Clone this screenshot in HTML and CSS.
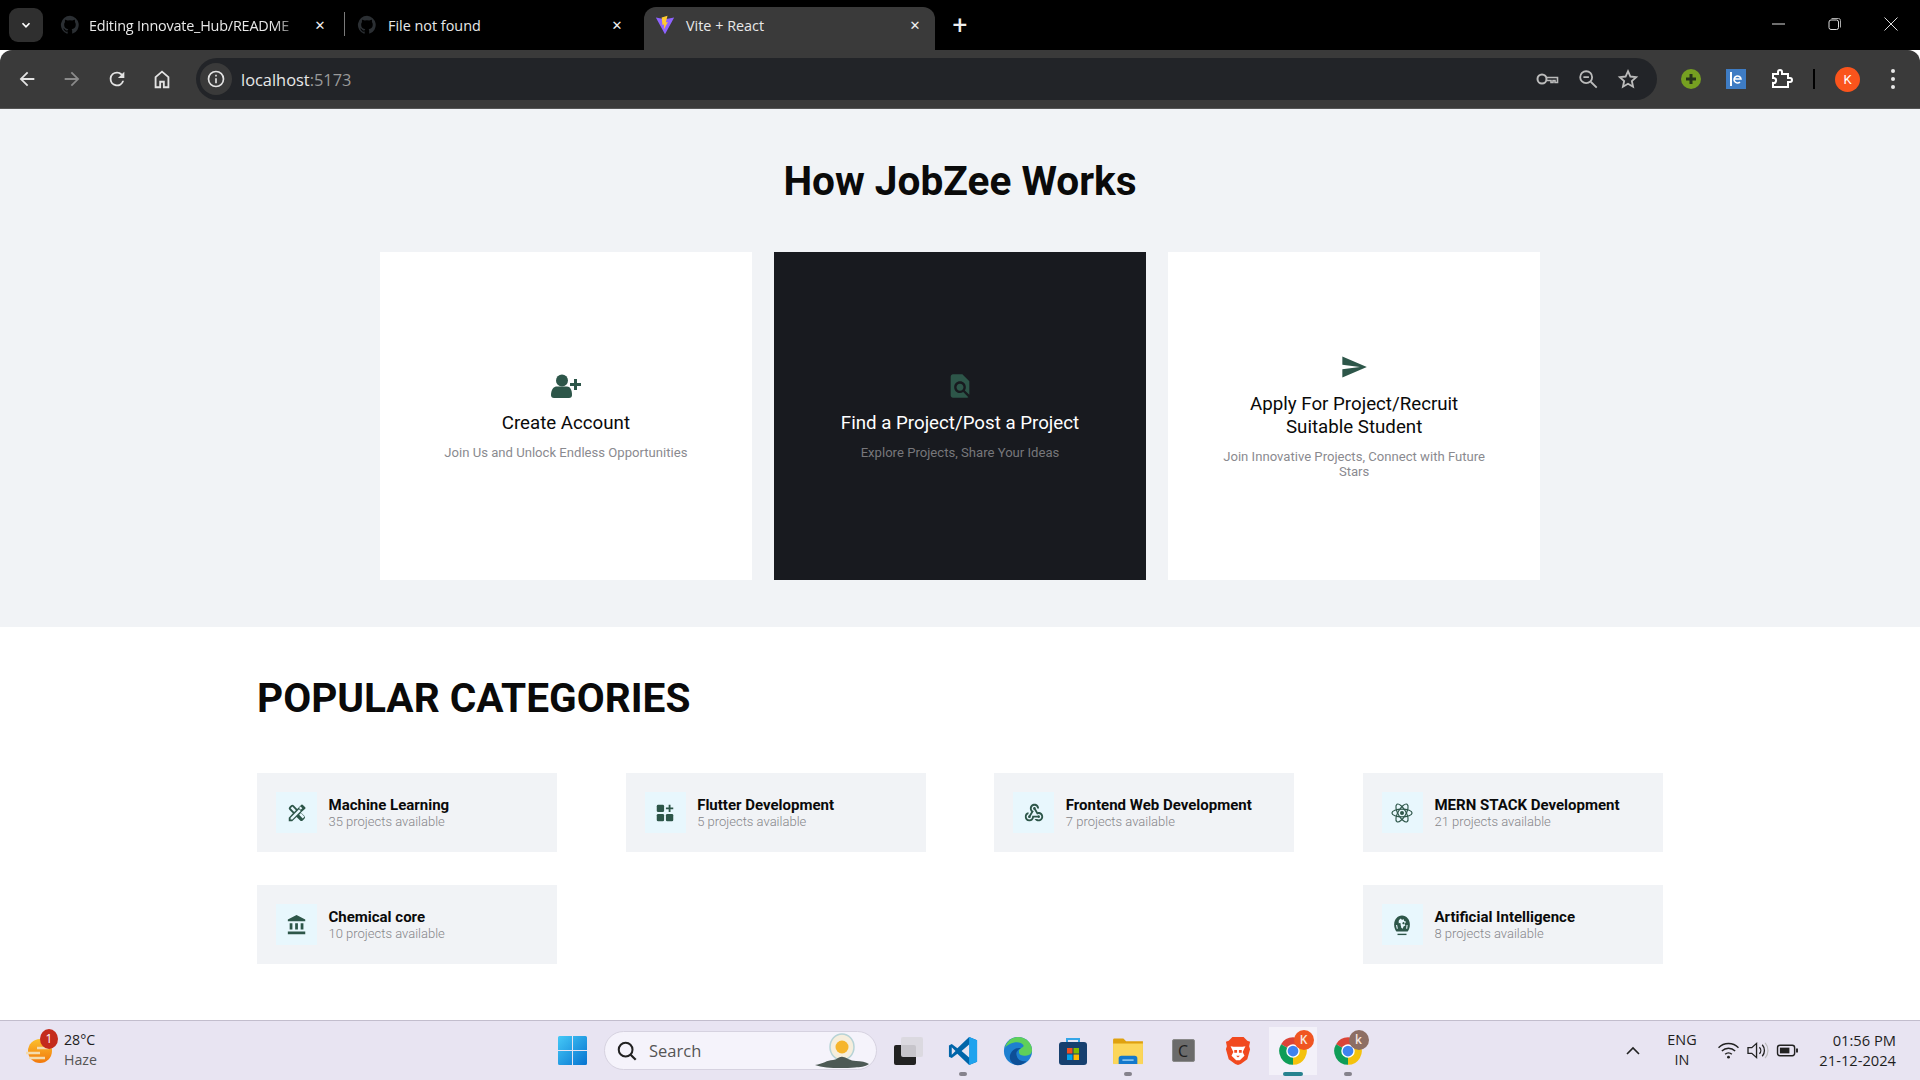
FILE: index.html
```html
<!DOCTYPE html>
<html lang="en">
<head>
<meta charset="utf-8">
<title>Vite + React</title>
<link rel="stylesheet" href="styles.css">
</head>
<body>
<svg class="defs" width="0" height="0" aria-hidden="true">
  <symbol id="gh" viewBox="0 0 24 24"><path d="M12 1a11 11 0 0 0-3.500 21.400c.500.100.700-.200.700-.500v-2c-3 .700-3.700-1.300-3.700-1.300-.500-1.200-1.200-1.600-1.200-1.600-1-.700.100-.700.100-.700 1.100.100 1.700 1.100 1.700 1.100 1 1.700 2.600 1.200 3.200.900.100-.700.400-1.200.700-1.500-2.400-.300-5-1.200-5-5.400 0-1.200.400-2.200 1.100-2.900-.100-.300-.500-1.400.100-2.900 0 0 .900-.300 3 1.100a10 10 0 0 1 5.500 0c2.100-1.400 3-1.100 3-1.100.600 1.500.200 2.600.100 2.900.700.700 1.100 1.700 1.100 2.900 0 4.200-2.600 5.100-5 5.400.400.300.700 1 .700 2v3c0 .300.200.600.700.500A11 11 0 0 0 12 1z"/></symbol>
  <symbol id="chrome" viewBox="0 0 24 24"><path fill="#db4437" d="M2.470 6.500A11 11 0 0 1 21.530 6.500L12 12z"/><path fill="#f4c20d" d="M21.530 6.500A11 11 0 0 1 12 23L12 12z"/><path fill="#0f9d58" d="M12 23A11 11 0 0 1 2.470 6.500L12 12z"/><circle cx="12" cy="12" r="5.400" fill="#fff"/><circle cx="12" cy="12" r="4.300" fill="#3f83f0"/></symbol>
</svg>

<header class="tabstrip">
  <button class="tab-menu"><svg viewBox="0 0 24 24" class="i14"><path d="M6 9l6 6 6-6" fill="none" stroke="#fff" stroke-width="3"/></svg></button>
  <div class="tab tab-first">
    <svg class="favicon dim"><use href="#gh"/></svg>
    <span class="tab-title fade">Editing Innovate_Hub/README</span>
    <span class="tab-x">✕</span>
  </div>
  <span class="tab-sep"></span>
  <div class="tab tab-second">
    <svg class="favicon dim"><use href="#gh"/></svg>
    <span class="tab-title">File not found</span>
    <span class="tab-x">✕</span>
  </div>
  <div class="tab tab-active">
    <svg class="favicon" viewBox="0 0 24 24"><path fill="#8e63ff" d="M1 3l11 2 11-2-11 20z"/><path fill="#ffcb2e" d="M15 1L8 3l1 9 2-.5-.5 6 5-9-2.500.5z"/></svg>
    <span class="tab-title">Vite + React</span>
    <span class="tab-x">✕</span>
  </div>
  <span class="tab-new">+</span>
  <div class="win-ctrls">
    <svg viewBox="0 0 14 14" class="win"><path d="M0 7h13" stroke="#ddd" fill="none"/></svg>
    <svg viewBox="0 0 14 14" class="win"><rect x="1" y="3" width="9.500" height="9.500" rx="2" stroke="#ddd" fill="none"/><path d="M3.500 1.500h7a2 2 0 0 1 2 2v7" stroke="#aaa" fill="none"/></svg>
    <svg viewBox="0 0 14 14" class="win"><path d="M.5.500l13 13M13.500.500l-13 13" stroke="#ddd" fill="none"/></svg>
  </div>
</header>

<nav class="toolbar">
  <span class="tool"><svg viewBox="0 0 24 24" class="i22"><path fill="#e3e3e3" d="M20 11H7.800l5.600-5.600L12 4l-8 8 8 8 1.400-1.400L7.800 13H20z"/></svg></span>
  <span class="tool"><svg viewBox="0 0 24 24" class="i22"><path fill="#8a8a8a" d="M4 11h12.200l-5.600-5.600L12 4l8 8-8 8-1.400-1.400 5.600-5.600H4z"/></svg></span>
  <span class="tool"><svg viewBox="0 0 24 24" class="i22"><path fill="#e3e3e3" d="M17.650 6.350A7.950 7.950 0 0 0 12 4a8 8 0 1 0 7.730 10h-2.080A6 6 0 1 1 12 6c1.660 0 3.140.690 4.220 1.780L13 11h7V4z"/></svg></span>
  <span class="tool"><svg viewBox="0 0 24 24" class="i22"><path fill="none" stroke="#e3e3e3" stroke-width="2" d="M5 21V10l7-6 7 6v11h-5v-6h-4v6z"/></svg></span>
  <div class="omnibox">
    <span class="info"><svg viewBox="0 0 24 24" class="i20"><circle cx="12" cy="12" r="9" fill="none" stroke="#e3e3e3" stroke-width="2"/><path d="M12 11v6M12 7v2" stroke="#e3e3e3" stroke-width="2"/></svg></span>
    <span class="url">localhost<span class="url-dim">:5173</span></span>
    <span class="omni-icons">
      <svg viewBox="0 0 24 24" class="i24"><circle cx="7" cy="12" r="4.500" fill="none" stroke="#bbb" stroke-width="2"/><path d="M11.500 10.500h11v5h-2.500v-2h-2v2h-2v-2h-4.500" fill="none" stroke="#bbb" stroke-width="1.600"/></svg>
      <svg viewBox="0 0 24 24" class="i22"><circle cx="10" cy="10" r="6.500" fill="none" stroke="#bbb" stroke-width="2"/><path d="M15 15l6.500 6.500M7 10h6" stroke="#bbb" stroke-width="2"/></svg>
      <svg viewBox="0 0 24 24" class="i22"><path fill="none" stroke="#bbb" stroke-width="2" d="M12 3.500l2.600 5.800 6.300.700-4.700 4.200 1.300 6.200L12 17.200l-5.500 3.200 1.300-6.200L3.100 10l6.300-.700z"/></svg>
    </span>
  </div>
  <div class="ext-row">
    <span class="ext"><svg viewBox="0 0 22 22" class="i22"><circle cx="11" cy="11" r="10" fill="#76a021"/><path d="M11 6v10M6 11h10" stroke="#26331b" stroke-width="3"/></svg></span>
    <span class="ext"><svg viewBox="0 0 20 20" class="i20"><rect width="20" height="20" fill="#3e7cc4"/><path d="M5 3v14" stroke="#fff" stroke-width="2"/><path d="M8 10h7a3.500 3.500 0 1 0-1 3" fill="none" stroke="#fff" stroke-width="1.600"/></svg></span>
    <span class="ext"><svg viewBox="0 0 24 24" class="i24"><path fill="none" stroke="#fff" stroke-width="2" d="M4 7h5V5a2 2 0 0 1 4 0v2h6v4h2a2 2 0 0 1 0 4h-2v5H4v-4a2.500 2.500 0 0 0 1-5L4 11z"/></svg></span>
    <span class="ext-sep"></span>
    <span class="avatar">K</span>
    <span class="dots"><i></i><i></i><i></i></span>
  </div>
</nav>

<main class="page">
  <section class="how">
    <h1 class="how-title">How JobZee Works</h1>
    <div class="how-grid">
      <article class="how-card">
        <svg viewBox="0 0 30 24" class="how-icon icon-user"><circle cx="11" cy="6.500" r="6"/><path d="M0 21c0-6 3-8.500 6-8.500h10c3 0 5 3 5 8.500 0 2-1 3-3 3H3c-2 0-3-1-3-3z"/><path d="M24.500 5v11M19 10.500h11" stroke="#2d5649" stroke-width="3"/></svg>
        <h3 class="how-name">Create Account</h3>
        <p class="how-text">Join Us and Unlock Endless Opportunities</p>
      </article>
      <article class="how-card how-card-dark">
        <svg viewBox="0 0 24 24" class="how-icon"><path d="M20 19.590V8l-6-6H6c-1.100 0-1.990.900-1.990 2L4 20c0 1.100.890 2 1.990 2H18c.450 0 .850-.150 1.190-.400l-4.430-4.430c-.800.520-1.740.830-2.760.830-2.760 0-5-2.240-5-5s2.240-5 5-5 5 2.240 5 5c0 1.020-.310 1.960-.830 2.750L20 19.590zM9 13c0 1.660 1.340 3 3 3s3-1.340 3-3-1.340-3-3-3-3 1.340-3 3z"/></svg>
        <h3 class="how-name">Find a Project/Post a Project</h3>
        <p class="how-text">Explore Projects, Share Your Ideas</p>
      </article>
      <article class="how-card">
        <svg viewBox="0 0 24 24" class="how-icon"><path d="M2.010 21L23 12 2.010 3 2 10l15 2-15 2z"/></svg>
        <h3 class="how-name">Apply For Project/Recruit Suitable Student</h3>
        <p class="how-text">Join Innovative Projects, Connect with Future Stars</p>
      </article>
    </div>
  </section>

  <section class="cats">
    <h2 class="cats-title">POPULAR CATEGORIES</h2>
    <div class="cats-grid">
      <div class="cat">
        <span class="cat-icon"><svg viewBox="0 0 24 24"><path fill-rule="evenodd" d="M20.970 7.270a1 1 0 0 0 0-1.410l-2.830-2.830a1 1 0 0 0-1.410 0l-4.490 4.490-3.890-3.890a2 2 0 0 0-2.830 0l-1.900 1.900a2 2 0 0 0 0 2.830l3.890 3.890L3 17.250V21h3.750l4.760-4.760 3.890 3.890a2 2 0 0 0 2.830 0l1.900-1.900a2 2 0 0 0 0-2.830l-3.890-3.890zM5.040 6.940l1.890-1.900 3.890 3.890-1.900 1.900zm9.300 7.080l1.900-1.900 3.890 3.890-1.900 1.900zM6.920 19H5v-1.920l9.200-9.200 1.920 1.920zm9.200-10.610l-1.920-1.920 1.670-1.670 1.920 1.920z"/></svg></span>
        <span class="cat-body"><b class="cat-name">Machine Learning</b><small class="cat-sub">35 projects available</small></span>
      </div>
      <div class="cat">
        <span class="cat-icon"><svg viewBox="0 0 24 24"><rect x="3" y="3" width="8" height="8" rx="1.500"/><rect x="3" y="13" width="8" height="8" rx="1.500"/><rect x="13" y="13" width="8" height="8" rx="1.500"/><path d="M17 3v8M13 7h8" stroke="#2d5649" stroke-width="2"/></svg></span>
        <span class="cat-body"><b class="cat-name">Flutter Development</b><small class="cat-sub">5 projects available</small></span>
      </div>
      <div class="cat">
        <span class="cat-icon"><svg viewBox="0 0 24 24"><path d="M10 15h5.880c.270-.310.670-.500 1.120-.500.830 0 1.500.670 1.500 1.500s-.670 1.500-1.500 1.500c-.440 0-.840-.190-1.120-.500H11.900A5 5 0 1 1 6 11.100v2.070c-1.160.410-2 1.530-2 2.830 0 1.650 1.350 3 3 3s3-1.350 3-3v-1zm2.500-11c1.650 0 3 1.350 3 3h2c0-2.760-2.240-5-5-5s-5 2.240-5 5c0 1.430.600 2.710 1.550 3.620l-2.350 3.900c-.680.140-1.200.750-1.200 1.480 0 .830.670 1.500 1.500 1.500s1.500-.670 1.500-1.500c0-.160-.020-.310-.070-.450l3.380-5.630C10.490 9.610 9.500 8.420 9.500 7c0-1.650 1.350-3 3-3zm4.500 9c-.640 0-1.230.200-1.720.540l-3.050-5.070C11.530 8.350 11 7.740 11 7c0-.830.670-1.500 1.500-1.500S14 6.170 14 7c0 .150-.020.290-.060.430l2.190 3.650c.280-.050.570-.080.870-.080 2.760 0 5 2.240 5 5s-2.240 5-5 5c-1.850 0-3.470-1.010-4.330-2.500h2.670c.480.320 1.050.500 1.660.500 1.650 0 3-1.350 3-3s-1.350-3-3-3z"/></svg></span>
        <span class="cat-body"><b class="cat-name">Frontend Web Development</b><small class="cat-sub">7 projects available</small></span>
      </div>
      <div class="cat">
        <span class="cat-icon"><svg viewBox="0 0 24 24"><g fill="none" stroke="#2d5649" stroke-width="1.300"><ellipse cx="12" cy="12" rx="11" ry="4.300"/><ellipse cx="12" cy="12" rx="11" ry="4.300" transform="rotate(60 12 12)"/><ellipse cx="12" cy="12" rx="11" ry="4.300" transform="rotate(120 12 12)"/></g><circle cx="12" cy="12" r="2.200"/></svg></span>
        <span class="cat-body"><b class="cat-name">MERN STACK Development</b><small class="cat-sub">21 projects available</small></span>
      </div>
      <div class="cat">
        <span class="cat-icon"><svg viewBox="0 0 24 24"><path d="M4 10v7h3v-7H4zm6 0v7h3v-7h-3zM2 22h19v-3H2v3zm14-12v7h3v-7h-3zm-4.500-9L2 6v2h19V6l-9.500-5z"/></svg></span>
        <span class="cat-body"><b class="cat-name">Chemical core</b><small class="cat-sub">10 projects available</small></span>
      </div>
      <div class="cat cat-last">
        <span class="cat-icon"><svg viewBox="0 0 24 24" preserveAspectRatio="none" class="icon-ai"><path d="M4.500 19C2.500 17 1.500 14.500 1.500 11.500 1.500 6 6 1.500 12 1.500S22.500 6 22.500 11.500c0 3-1 5.500-3 7.500z"/><path d="M6 21.500h12v1.500H6z"/><path fill="#e8f7fd" d="M8 6.500l2.500-1.500 1.500 1.500 2-1 1 2 2.500 1-2 2.500 1 1.500-2.500 1-1 2.500-2-1-.5-2.500-2.500-1.500-.5-2.500z"/><circle cx="9" cy="11" r="1.300"/><circle cx="14" cy="10" r="1.300"/><path fill="#e8f7fd" d="M4 12h1.500l1 4H5zM19.500 12H18l-.500 4H19z"/></svg></span>
        <span class="cat-body"><b class="cat-name">Artificial Intelligence</b><small class="cat-sub">8 projects available</small></span>
      </div>
    </div>
  </section>
</main>

<footer class="taskbar">
  <div class="weather">
    <span class="weather-icon">
      <svg viewBox="0 0 28 26" class="i-weather"><defs><linearGradient id="sun" x1="0" y1="0" x2="0" y2="1"><stop offset="0" stop-color="#fbc02d"/><stop offset="1" stop-color="#f2780c"/></linearGradient></defs><circle cx="15" cy="13" r="12" fill="url(#sun)"/><path d="M1 15h14M4 20h16M12 10h12" stroke="#f3dcae" stroke-width="2.400"/></svg>
      <span class="weather-badge">1</span>
    </span>
    <span class="weather-text"><span class="w-temp">28°C</span><span class="w-cond">Haze</span></span>
  </div>
  <svg viewBox="0 0 29 29" class="win-logo"><defs><linearGradient id="wl" x1="0" y1="0" x2="1" y2="1"><stop offset="0" stop-color="#45c9f7"/><stop offset="1" stop-color="#0673d0"/></linearGradient></defs><path fill="url(#wl)" d="M0 1.500A1.500 1.500 0 0 1 1.500 0H14v14H0zM15 0h12.500A1.500 1.500 0 0 1 29 1.500V14H15zM0 15h14v14H1.500A1.500 1.500 0 0 1 0 27.500zM15 15h14v12.500a1.500 1.500 0 0 1-1.500 1.500H15z"/></svg>
  <div class="search">
    <svg viewBox="0 0 24 24" class="i22"><circle cx="10.500" cy="10.500" r="7.500" fill="none" stroke="#222" stroke-width="2.200"/><path d="M16 16l5.500 5.500" stroke="#222" stroke-width="2.400"/></svg>
    <span class="search-text">Search</span>
    <svg viewBox="0 0 56 36" class="search-art"><ellipse cx="28" cy="14" rx="12" ry="13" fill="#f6eedc" stroke="#b7d3d6" stroke-width="1.500"/><circle cx="28" cy="14" r="6.500" fill="#f6b52c"/><path d="M1 32c8-1 12-5 18-5 4 0 6-4 10-3 4 .500 7 4 13 4 5 0 10 1 13 3-4 3-9 3-14 3.500-13 1-30 1-40-2.500z" fill="#4d5a55"/></svg>
  </div>
  <div class="apps">
    <span class="app"><svg viewBox="0 0 30 30" class="i30"><rect x="1" y="9" width="22" height="20" rx="2" fill="#222"/><rect x="8" y="1" width="22" height="20" rx="2" fill="#d9d7de" fill-opacity=".9"/></svg></span>
    <span class="app app-run"><svg viewBox="0 0 32 32" class="i30"><path fill="#0065a9" d="M22.500 1L10 13 4 8.500 1 10v12l3 1.500 6-4.500 12.500 12 8.500-3.500V4.500z"/><path fill="#1fa3ee" d="M22.500 1l8.500 3.500v23L22.500 31z"/><path fill="#e8e4f1" d="M22.500 9l-8 7 8 7zM4 12v8l4-4z"/></svg></span>
    <span class="app"><svg viewBox="0 0 32 32" class="i30"><circle cx="16" cy="16" r="15" fill="#1d7fd0"/><path fill="#5fd05a" d="M2 13C4 5 10 1 16 1c8 0 15 6 15 14 0 4-3 6-7 6s-7-1-7-4c0-5 5-4 5-7-2-3-6-4-10-3-5 1-9 4-10 6z"/><path fill="#0d4f97" d="M14 31c-6-2-8-8-6-12 2-5 8-7 11-6-4 2-6 5-4 9 1 4 6 5 10 5-3 3-7 5-11 4z"/></svg></span>
    <span class="app"><svg viewBox="0 0 30 30" class="i30"><path d="M9 8V3h12v5" fill="none" stroke="#35a6e8" stroke-width="2"/><rect x="1" y="6" width="28" height="23" rx="3" fill="#17406f"/><rect x="9" y="12" width="5.500" height="5.500" fill="#f25022"/><rect x="15.500" y="12" width="5.500" height="5.500" fill="#7fba00"/><rect x="9" y="18.500" width="5.500" height="5.500" fill="#00a4ef"/><rect x="15.500" y="18.500" width="5.500" height="5.500" fill="#ffb900"/></svg></span>
    <span class="app app-run"><svg viewBox="0 0 32 30" class="i-folder"><path fill="#dfa10f" d="M0 3a1.500 1.500 0 0 1 1.500-1.500H11l3 3h18V28H0z"/><path fill="#fbd65a" d="M0 7h32v22H0z"/><path fill="#1479cc" d="M6 29v-6a3 3 0 0 1 3-3h14a3 3 0 0 1 3 3v6z"/><path fill="#9fd3f5" d="M10 24h12v1.500H10z"/></svg></span>
    <span class="app"><span class="c-app">C</span></span>
    <span class="app"><svg viewBox="0 0 28 32" class="i-brave"><path fill="#f1491f" d="M4 5l4-4h12l4 4 3 1-1 5 1 3-3 11-7 5-3 1-3-1-7-5-3-11 1-3-1-5z"/><path fill="#fff" d="M6 11c3 1 5 0 8 .500 3-.500 5 .500 8-.500l-3 6 2 4-5 5h-4l-5-5 2-4z"/><path fill="#f1491f" d="M10 15h3v3h-3zM15 15h3v3h-3zM12 21h4l-2 2z"/></svg></span>
    <span class="app app-active"><svg class="i30"><use href="#chrome"/></svg><span class="app-badge badge-k">K</span></span>
    <span class="app app-run"><svg class="i30"><use href="#chrome"/></svg><span class="app-badge badge-k2">k</span></span>
  </div>
  <div class="tray">
    <span class="tray-slot slot-chev"><svg viewBox="0 0 16 10" class="chev"><path d="M2 8l6-6 6 6" fill="none" stroke="#222" stroke-width="1.600"/></svg></span>
    <span class="tray-lang"><span>ENG</span><span>IN</span></span>
    <span class="tray-slot slot-wifi"><svg viewBox="0 0 24 20" class="i-tray"><g fill="none" stroke="#222" stroke-width="1.500"><path d="M1.500 7a15 15 0 0 1 21 0"/><path d="M5 10.500a10 10 0 0 1 14 0"/><path d="M8.500 14a5 5 0 0 1 7 0"/></g><circle cx="12" cy="17" r="1.500" fill="#222"/></svg></span>
    <span class="tray-slot slot-vol"><svg viewBox="0 0 24 20" class="i-tray"><path d="M2 7v6h4l5 4.500v-15L6 7z" fill="none" stroke="#222" stroke-width="1.400"/><path d="M14 6.500a5 5 0 0 1 0 7M17 4a9 9 0 0 1 0 12" fill="none" stroke="#222" stroke-width="1.400"/><path d="M20 2a12 12 0 0 1 0 16" fill="none" stroke="#bbb" stroke-width="1.200"/></svg></span>
    <span class="tray-slot slot-bat"><svg viewBox="0 0 24 20" class="i-tray"><rect x="1.500" y="4.500" width="18" height="11" rx="2.500" fill="none" stroke="#222" stroke-width="1.500"/><rect x="4" y="7" width="10" height="6" fill="#222"/><path d="M21 8h2v4h-2z" fill="#222"/></svg></span>
    <span class="clock"><span>01:56 PM</span><span>21-12-2024</span></span>
  </div>
</footer>
</body>
</html>
```

FILE: styles.css
```css
* { box-sizing: border-box; }
html, body { margin: 0; padding: 0; height: 100%; }
body {
  display: flex;
  flex-direction: column;
  height: 1080px;
  overflow: hidden;
  font-family: Roboto, "Liberation Sans", sans-serif;
  background: #fff;
}
.defs { position: absolute; }
svg { display: block; flex: none; }
.i14 { width: 14px; height: 14px; }
.i20 { width: 20px; height: 20px; }
.i22 { width: 22px; height: 22px; }
.i24 { width: 24px; height: 24px; }
.i30 { width: 30px; height: 30px; }

/* tab strip */
.tabstrip {
  flex: 0 0 50px;
  display: flex;
  align-items: flex-end;
  background: #000;
  color: #e8e8e8;
  font-family: "Open Sans", "Liberation Sans", sans-serif;
  font-size: 14.4px;
}
.tab-menu {
  flex: none;
  width: 34px;
  height: 34px;
  margin: 0 14px 8px 9px;
  border: 0;
  border-radius: 9px;
  background: #2f2f2f;
  display: flex;
  align-items: center;
  justify-content: center;
  padding: 0;
}
.tab {
  height: 43px;
  display: flex;
  align-items: center;
  padding-bottom: 7px;
}
.tab-first { width: 287px; padding-left: 3px; padding-right: 17px; }
.tab-first .favicon { margin-right: 9px; }
.tab-sep { flex: none; width: 1px; height: 24px; margin: 0 0 14px; background: #7a7a7a; }
.tab-second { width: 299px; padding-left: 12px; padding-right: 20px; }
.tab-active {
  width: 291px;
  padding-left: 11px;
  padding-right: 13px;
  background: #3a3a3a;
  border-radius: 12px 12px 0 0;
}
.favicon { width: 20px; height: 20px; margin-right: 11px; fill: currentColor; }
.favicon.dim { color: #2b2f33; }
.tab-title { flex: 1; min-width: 0; white-space: nowrap; }
.fade {
  letter-spacing: -0.2px;
  margin-right: 8px;
  mask-image: linear-gradient(90deg, #000 86%, transparent 99%);
}
.tab-x { flex: none; font-size: 13px; width: 14px; text-align: center; color: #eee; font-family: "DejaVu Sans", sans-serif; }
.tab-new { flex: none; margin: 0 0 9px 16px; width: 18px; text-align: center; font-size: 26px; line-height: 32px; color: #eee; font-family: Roboto, sans-serif; }
.win-ctrls {
  margin-left: auto;
  height: 48px;
  display: flex;
  align-items: center;
  gap: 42px;
  padding-right: 22px;
  align-self: flex-start;
}
.win { width: 14px; height: 14px; }

/* toolbar */
.toolbar {
  flex: 0 0 59px;
  display: flex;
  align-items: center;
  background: #3a3a3a;
  border-radius: 12px 12px 0 0;
  padding-left: 4px;
  border-bottom: 1px solid #555;
}
.tool { flex: none; width: 45px; display: flex; justify-content: center; }
.omnibox {
  flex: none;
  width: 1461px;
  height: 42px;
  margin-left: 12px;
  border-radius: 21px;
  background: #222428;
  display: flex;
  align-items: center;
  padding-left: 4px;
}
.info {
  width: 32px;
  height: 32px;
  border-radius: 50%;
  background: #3a3a3a;
  display: flex;
  align-items: center;
  justify-content: center;
}
.url { margin-left: 9px; font-family: "Open Sans", sans-serif; font-size: 16.4px; color: #e8e8e8; }
.url-dim { color: #9a9a9a; }
.omni-icons { margin-left: auto; display: flex; align-items: center; gap: 18px; padding-right: 18px; }
.ext-row { flex: 1; display: flex; align-items: center; padding-left: 11.500px; }
.ext { flex: none; width: 45px; display: flex; justify-content: center; }
.ext-sep { width: 2px; height: 20px; background: #000; margin: 0 20px 0 9.500px; }
.avatar {
  flex: none;
  width: 25px;
  height: 25px;
  border-radius: 50%;
  background: #fa541c;
  color: #fff;
  font-size: 13px;
  display: flex;
  align-items: center;
  justify-content: center;
}
.dots { margin-left: 31px; display: flex; flex-direction: column; gap: 4px; }
.dots i { display: block; width: 4px; height: 4px; border-radius: 50%; background: #e8e8e8; }

/* page */
.page { flex: 1; min-height: 0; display: flex; flex-direction: column; }
.how { flex: 0 0 518px; background: #f1f3f6; display: flex; flex-direction: column; align-items: center; padding-top: 50px; }
.how-title { margin: 0; font-size: 40.6px; line-height: 44px; font-weight: 700; color: #0a0a0a; }
.how-grid {
  margin-top: 49px;
  width: 1160px;
  display: grid;
  grid-template-columns: repeat(3, 1fr);
  gap: 22.400px;
}
.how-card {
  height: 328px;
  background: #fff;
  display: flex;
  flex-direction: column;
  align-items: center;
  justify-content: center;
  text-align: center;
  padding: 0 50px;
  color: #0a0a0a;
}
.how-card-dark { background: #181a1f; color: #fff; }
.how-icon { width: 28px; height: 28px; fill: #2d5649; }
.icon-user { width: 30px; height: 24px; margin: 2px 0; }
.how-name { margin: 12px 0 0; font-size: 18.72px; line-height: 23px; font-weight: 400; }
.how-text { margin: 9.500px 0 0; font-size: 13.12px; line-height: 15px; color: #8a8a8f; }
.how-card-dark .how-text { color: #77777b; }

.cats { flex: 1; padding: 36px 257px 0; }
.cats-title { margin: 0; font-size: 40.6px; line-height: 70px; font-weight: 700; color: #0a0a0a; }
.cats-grid {
  margin-top: 40px;
  display: grid;
  grid-template-columns: repeat(4, 300px);
  justify-content: space-between;
  row-gap: 33px;
}
.cat {
  height: 79px;
  background: #f1f3f6;
  display: flex;
  align-items: center;
  padding-left: 19px;
  gap: 11.500px;
}
.cat-last { grid-column: 4; }
.cat-icon {
  flex: none;
  width: 41px;
  height: 41px;
  background: #e8f7fd;
  display: flex;
  align-items: center;
  justify-content: center;
}
.cat-icon svg { width: 22px; height: 22px; fill: #2d5649; }
.cat-icon svg.icon-ai { width: 18px; }
.cat-body { display: flex; flex-direction: column; }
.cat-name { font-size: 15px; line-height: 17px; font-weight: 700; color: #0a0a0a; }
.cat-sub { font-size: 13px; line-height: 15px; color: #86868a; font-weight: 300; }

/* taskbar */
.taskbar {
  flex: 0 0 60px;
  display: flex;
  align-items: center;
  background: #e8e4f2;
  border-top: 1px solid #c2bdcd;
  font-family: "Open Sans", sans-serif;
  font-size: 14px;
  color: #1e1e1e;
}
.weather { flex: 0 0 558px; display: flex; align-items: center; padding-left: 25px; }
.weather-icon { position: relative; width: 28px; height: 26px; }
.i-weather { width: 28px; height: 26px; }
.weather-badge {
  position: absolute;
  left: 15px;
  top: -9px;
  width: 18px;
  height: 20px;
  border-radius: 50%;
  background: #c42b1c;
  color: #fff;
  font-size: 12px;
  text-align: center;
  line-height: 20px;
}
.weather-text { margin-left: 11px; display: flex; flex-direction: column; line-height: 19.500px; font-size: 14.2px; padding-bottom: 2px; }
.w-cond { color: #555; }
.win-logo { width: 29px; height: 29px; }
.search {
  flex: none;
  width: 273px;
  height: 39px;
  margin-left: 17px;
  border-radius: 20px;
  background: #f5f3fb;
  border: 1px solid #d6d2e0;
  display: flex;
  align-items: center;
  padding-left: 11px;
  color: #555;
  font-size: 16.5px;
}
.search-text { margin-left: 11px; }
.search-art { margin-left: auto; margin-right: 6px; width: 56px; height: 36px; }
.apps { flex: none; margin-left: 3.500px; display: flex; }
.app {
  position: relative;
  flex: none;
  width: 55px;
  height: 48px;
  display: flex;
  align-items: center;
  justify-content: center;
}
.app-run::after, .app-active::after {
  content: "";
  position: absolute;
  left: 50%;
  bottom: -1px;
  width: 8px;
  height: 4px;
  margin-left: -4px;
  border-radius: 2px;
  background: #85828c;
}
.app-active::after { width: 20px; margin-left: -10px; background: #27828f; }
.app-active { background: linear-gradient(#f3f1f9, #f3f1f9) center / 48px 48px no-repeat; }
.i-folder { width: 30px; height: 28px; }
.i-brave { width: 26px; height: 30px; }
.c-app { width: 23px; height: 23px; background: #6b6b6b; color: #1e1e1e; text-align: center; font-size: 16px; line-height: 23px; border: 1px solid #8a8a8a; border-radius: 2px; }
.app-badge {
  position: absolute;
  left: 28px;
  top: 3px;
  width: 20px;
  height: 20px;
  border-radius: 50%;
  color: #f7e7df;
  font-size: 12px;
  font-weight: 600;
  text-align: center;
  line-height: 20px;
}
.badge-k { background: #f05522; }
.badge-k2 { background: #8d6e63; }
.tray { flex: 1; display: flex; align-items: center; justify-content: flex-end; padding-right: 24px; font-size: 14.4px; }
.tray-slot { flex: none; display: flex; justify-content: center; }
.slot-chev { width: 36px; margin-right: 6px; }
.slot-wifi { width: 30px; margin-left: 6px; }
.slot-vol { width: 29px; }
.slot-bat { width: 31px; }
.chev { width: 16px; height: 10px; }
.i-tray { width: 23px; height: 19px; }
.tray-lang { flex: none; width: 50px; display: flex; flex-direction: column; align-items: center; line-height: 20px; padding-bottom: 2px; }
.clock { flex: none; width: 93px; display: flex; flex-direction: column; align-items: flex-end; line-height: 20px; padding-bottom: 2px; white-space: nowrap; font-size: 14.7px; }
```
